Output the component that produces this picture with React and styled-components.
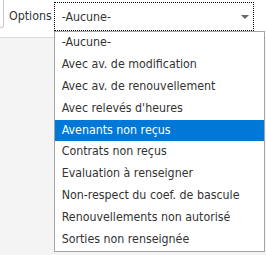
import styled, { createGlobalStyle } from 'styled-components';

const options = [
    '-Aucune-',
    'Avec av. de modification',
    'Avec av. de renouvellement',
    "Avec relevés d'heures",
    'Avenants non reçus',
    'Contrats non reçus',
    'Evaluation à renseigner',
    'Non-respect du coef. de bascule',
    'Renouvellements non autorisé',
    'Sorties non renseignée',
];

const GlobalStyle = createGlobalStyle`
    body {
        margin: 0;
        background: #f4f4f4;
        font-family: "DejaVu Sans Condensed", "DejaVu Sans", sans-serif;
    }
`;

const Page = styled.div`
    min-height: 255px;
    position: relative;
`;

const Toolbar = styled.div`
    position: relative;
    z-index: 1;
    height: 37px;
    background: #fff;
    border-bottom: 1px solid #dcdcdc;
    display: flex;
    align-items: flex-start;
`;

const CutInput = styled.div`
    width: 3px;
    height: 27px;
    border: 1px solid #c8c8c8;
    border-left: none;
    border-top: none;
    border-bottom-right-radius: 3px;
`;

const Label = styled.span`
    margin: 8px 0 0 5px;
    font-size: 12.3px;
    color: #333;
    line-height: 16px;
`;

const SelectBox = styled.div`
    position: relative;
    margin: 2px 0 0 2px;
    width: 200px;
    height: 29px;
    border: 1px dotted #000;
    display: flex;
    align-items: center;
    justify-content: space-between;
    padding: 0 3px 0 7px;
    box-sizing: border-box;
    font-size: 12.3px;
    color: #333;
`;

const Arrow = styled.span`
    width: 0;
    height: 0;
    border-left: 4.5px solid transparent;
    border-right: 4.5px solid transparent;
    border-top: 4px solid #666;
    margin-right: 1px;
`;

const Menu = styled.ul`
    position: absolute;
    z-index: 2;
    left: -1px;
    top: 28px;
    width: 211px;
    margin: 0;
    padding: 0;
    list-style: none;
    background: #fff;
    border: 1px solid #a5a5a5;
    box-sizing: border-box;
`;

const Item = styled.li`
    height: 21.9px;
    line-height: 21.9px;
    padding-left: 7px;
    font-size: 12.3px;
    white-space: nowrap;
    color: ${(p) => (p.$active ? '#fff' : '#333')};
    background: ${(p) => (p.$active ? '#0078d7' : 'transparent')};
`;

export default function App() {
    return (
        <Page>
            <GlobalStyle />
            <Toolbar>
                <CutInput />
                <Label>Options</Label>
                <SelectBox>
                    <span>-Aucune-</span>
                    <Arrow />
                    <Menu>
                        {options.map((o) => (
                            <Item key={o} $active={o === 'Avenants non reçus'}>
                                {o}
                            </Item>
                        ))}
                    </Menu>
                </SelectBox>
            </Toolbar>
        </Page>
    );
}
